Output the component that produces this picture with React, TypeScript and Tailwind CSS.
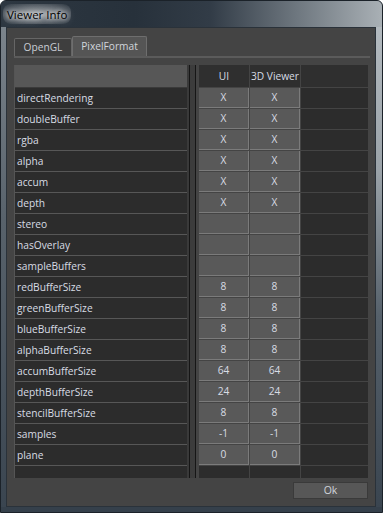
import React from "react";

const rows: [string, string, string][] = [
  ["directRendering", "X", "X"],
  ["doubleBuffer", "X", "X"],
  ["rgba", "X", "X"],
  ["alpha", "X", "X"],
  ["accum", "X", "X"],
  ["depth", "X", "X"],
  ["stereo", "", ""],
  ["hasOverlay", "", ""],
  ["sampleBuffers", "", ""],
  ["redBufferSize", "8", "8"],
  ["greenBufferSize", "8", "8"],
  ["blueBufferSize", "8", "8"],
  ["alphaBufferSize", "8", "8"],
  ["accumBufferSize", "64", "64"],
  ["depthBufferSize", "24", "24"],
  ["stencilBufferSize", "8", "8"],
  ["samples", "-1", "-1"],
  ["plane", "0", "0"],
];

function ValueCell({ v }: { v: string }) {
  return (
    <div className="h-[20px] bg-[#595959] border-r border-b border-[#7b7b7b] flex items-center justify-center text-[#d8dce4]">
      {v}
    </div>
  );
}

export default function App() {
  return (
    <div className="w-[383px] h-[513px] flex flex-col border border-[#1b2229] rounded-t-[6px] overflow-hidden bg-[#36414c] font-['Open_Sans','Noto_Sans',sans-serif] text-[10.2px] leading-none">
      {/* title bar */}
      <div className="h-[26px] flex items-center pl-[2px] bg-[linear-gradient(90deg,#2d3741_0%,#27313b_35%,#323c47_55%,#6f7880_78%,#a9b0b5_100%)]">
        <span className="px-[4px] py-[4px] text-[11.5px] text-black pt-[5px] rounded-[8px] bg-[radial-gradient(ellipse_at_center,rgba(255,255,255,0.55)_0%,rgba(255,255,255,0.25)_55%,rgba(255,255,255,0)_100%)] [text-shadow:0_0_4px_#fff,0_0_8px_#fff]">
          Viewer Info
        </span>
      </div>
      <div className="flex-1 flex">
        <div className="w-[5px] bg-[linear-gradient(180deg,#7b848c_0%,#58626b_40%,#3a4550_100%)]" />
        <div className="flex-1 border border-[#2a323a] bg-[#444444] flex flex-col">
          {/* tabs */}
          <div className="mt-[8px] ml-[7px] h-[20px] flex items-end">
            <div className="w-[58px] h-[18px] bg-[#3e3e3e] border border-b-0 border-[#666666] rounded-t-[2px] flex items-center justify-center text-[#c9cdd4]">
              OpenGL
            </div>
            <div className="w-[75px] h-[20px] bg-[#555555] border border-b-0 border-[#6e6e6e] rounded-t-[2px] flex items-center justify-center text-[#d2d6dc]">
              PixelFormat
            </div>
          </div>
          {/* pane */}
          <div className="ml-[7px] mr-[5px] border-t-2 border-[#5b5b5b] pt-[7px] pb-[1px]">
            <div className="h-[413px] flex overflow-hidden">
              {/* left label table */}
              <div className="w-[173px] border-l border-[#555555] flex flex-col bg-[#2c2c2c]">
                <div className="h-[23px] bg-[#575757] border-b border-[#3a3a3a]" />
                {rows.map(([label]) => (
                  <div
                    key={label}
                    className="h-[21px] border-b border-[#575757] flex items-center pl-[2px] text-[#d8dce4]"
                  >
                    {label}
                  </div>
                ))}
                <div className="flex-1" />
              </div>
              {/* splitter */}
              <div className="w-[12px] flex">
                <div className="w-[2px] bg-[#3a3a3a]" />
                <div className="w-px bg-[#161616]" />
                <div className="w-[5px] bg-[#3c3c3c]" />
                <div className="w-px bg-[#161616]" />
                <div className="w-[3px] bg-[#444444]" />
              </div>
              {/* value table */}
              <div className="w-[169px] bg-[#444444] grid grid-cols-[50px_50px_67px] gap-x-px gap-y-px content-start">
                <div className="h-[22px] bg-[#2f2f2f] flex items-center justify-center text-[#d8dce4]">UI</div>
                <div className="h-[22px] bg-[#2f2f2f] flex items-center justify-center text-[#d8dce4]">3D Viewer</div>
                <div className="h-[22px] bg-[#2f2f2f]" />
                {rows.map(([label, a, b]) => (
                  <React.Fragment key={label}>
                    <ValueCell v={a} />
                    <ValueCell v={b} />
                    <div className="h-[20px] bg-[#2c2c2c]" />
                  </React.Fragment>
                ))}
                <div className="h-[12px] bg-[#2c2c2c]" />
                <div className="h-[12px] bg-[#2c2c2c]" />
                <div className="h-[12px] bg-[#2c2c2c]" />
              </div>
            </div>
          </div>
          {/* button */}
          <div className="flex justify-end mt-[3px] mr-[7px]">
            <div className="w-[75px] h-[17px] bg-[#575757] border border-[#3a3a3a] flex items-center justify-center text-[#d0d4da] text-[10.5px]">
              Ok
            </div>
          </div>
        </div>
        <div className="w-[6px] bg-[linear-gradient(180deg,#b3babf_0%,#9aa2a8_30%,#56616b_60%,#3a4550_100%)]" />
      </div>
      <div className="h-[5px] bg-[#35404b]" />
    </div>
  );
}
